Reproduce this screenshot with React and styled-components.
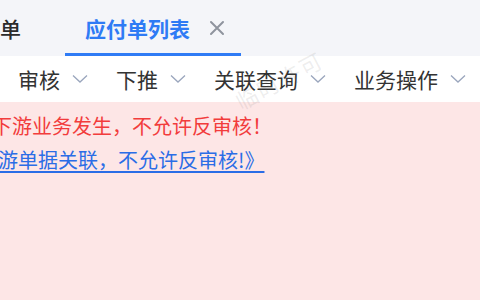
import React from "react";
import styled, { createGlobalStyle } from "styled-components";

const Global = createGlobalStyle`
  html, body { margin: 0; padding: 0; background: #fde6e6; }
  body { width: 480px; height: 300px; overflow: hidden; font-family: "Noto Sans CJK SC", "Noto Sans", sans-serif; }
`;

const Page = styled.div`
  position: relative;
  width: 480px;
  height: 300px;
  display: flex;
  flex-direction: column;
  overflow: hidden;
`;

const TabBar = styled.div`
  height: 56px;
  background: #f4f5f9;
  display: flex;
  align-items: stretch;
  flex-shrink: 0;
`;

const Tab = styled.div`
  display: flex;
  align-items: center;
  gap: 19px;
  padding: 3px ${(p) => (p.$active ? "16px" : "0")} 0 ${(p) => (p.$active ? "20px" : "0")};
  margin-right: ${(p) => (p.$active ? "0" : "44px")};
  font-size: 21px;
  font-weight: ${(p) => (p.$active ? 600 : 500)};
  color: ${(p) => (p.$active ? "#2f7bf5" : "#2b2b2b")};
  border-bottom: 3px solid ${(p) => (p.$active ? "#2f7bf5" : "transparent")};
  white-space: nowrap;
`;

const Close = styled.svg`
  width: 16px;
  height: 16px;
  display: block;
`;

const Toolbar = styled.div`
  height: 46px;
  background: #ffffff;
  display: flex;
  align-items: center;
  gap: 28px;
  padding-left: 18px;
  flex-shrink: 0;
`;

const ToolItem = styled.div`
  display: flex;
  align-items: center;
  gap: 12px;
  font-size: 21px;
  color: #333;
  white-space: nowrap;
`;

const Chevron = styled.svg`
  width: 16px;
  height: 10px;
  display: block;
`;

const Panel = styled.div`
  flex: 1;
  background: #fde6e6;
  padding-top: 7px;
  font-size: 20px;
  line-height: 34px;
  white-space: nowrap;
`;

const ErrorLine = styled.div`
  color: #f23c3c;
  margin-left: -48px;
`;

const LinkLine = styled.a`
  display: block;
  color: #2b6de6;
  text-decoration: underline;
  text-underline-offset: 3px;
  margin-left: -42px;
  width: max-content;
`;

const Watermark = styled.div`
  position: absolute;
  left: 244px;
  top: 84px;
  font-size: 22px;
  color: rgba(120, 120, 120, 0.13);
  transform: rotate(-28deg);
  transform-origin: left bottom;
  letter-spacing: 2px;
  pointer-events: none;
`;

const ChevronIcon = () => (
  <Chevron viewBox="0 0 16 10">
    <polyline points="1,1.5 8,8 15,1.5" fill="none" stroke="#9aa6bd" strokeWidth="1.3" />
  </Chevron>
);

export default function App() {
  return (
    <>
      <Global />
      <Page>
        <TabBar>
          <Tab>单</Tab>
          <Tab $active>
            应付单列表
            <Close viewBox="0 0 16 16">
              <path d="M2 2 L14 14 M14 2 L2 14" stroke="#8f949e" strokeWidth="2" strokeLinecap="round" />
            </Close>
          </Tab>
        </TabBar>
        <Toolbar>
          <ToolItem>审核<ChevronIcon /></ToolItem>
          <ToolItem>下推<ChevronIcon /></ToolItem>
          <ToolItem>关联查询<ChevronIcon /></ToolItem>
          <ToolItem>业务操作<ChevronIcon /></ToolItem>
        </Toolbar>
        <Panel>
          <ErrorLine>存在下游业务发生，不允许反审核！</ErrorLine>
          <LinkLine href="#">《下游单据关联，不允许反审核!》</LinkLine>
        </Panel>
        <Watermark>临时许可</Watermark>
      </Page>
    </>
  );
}
